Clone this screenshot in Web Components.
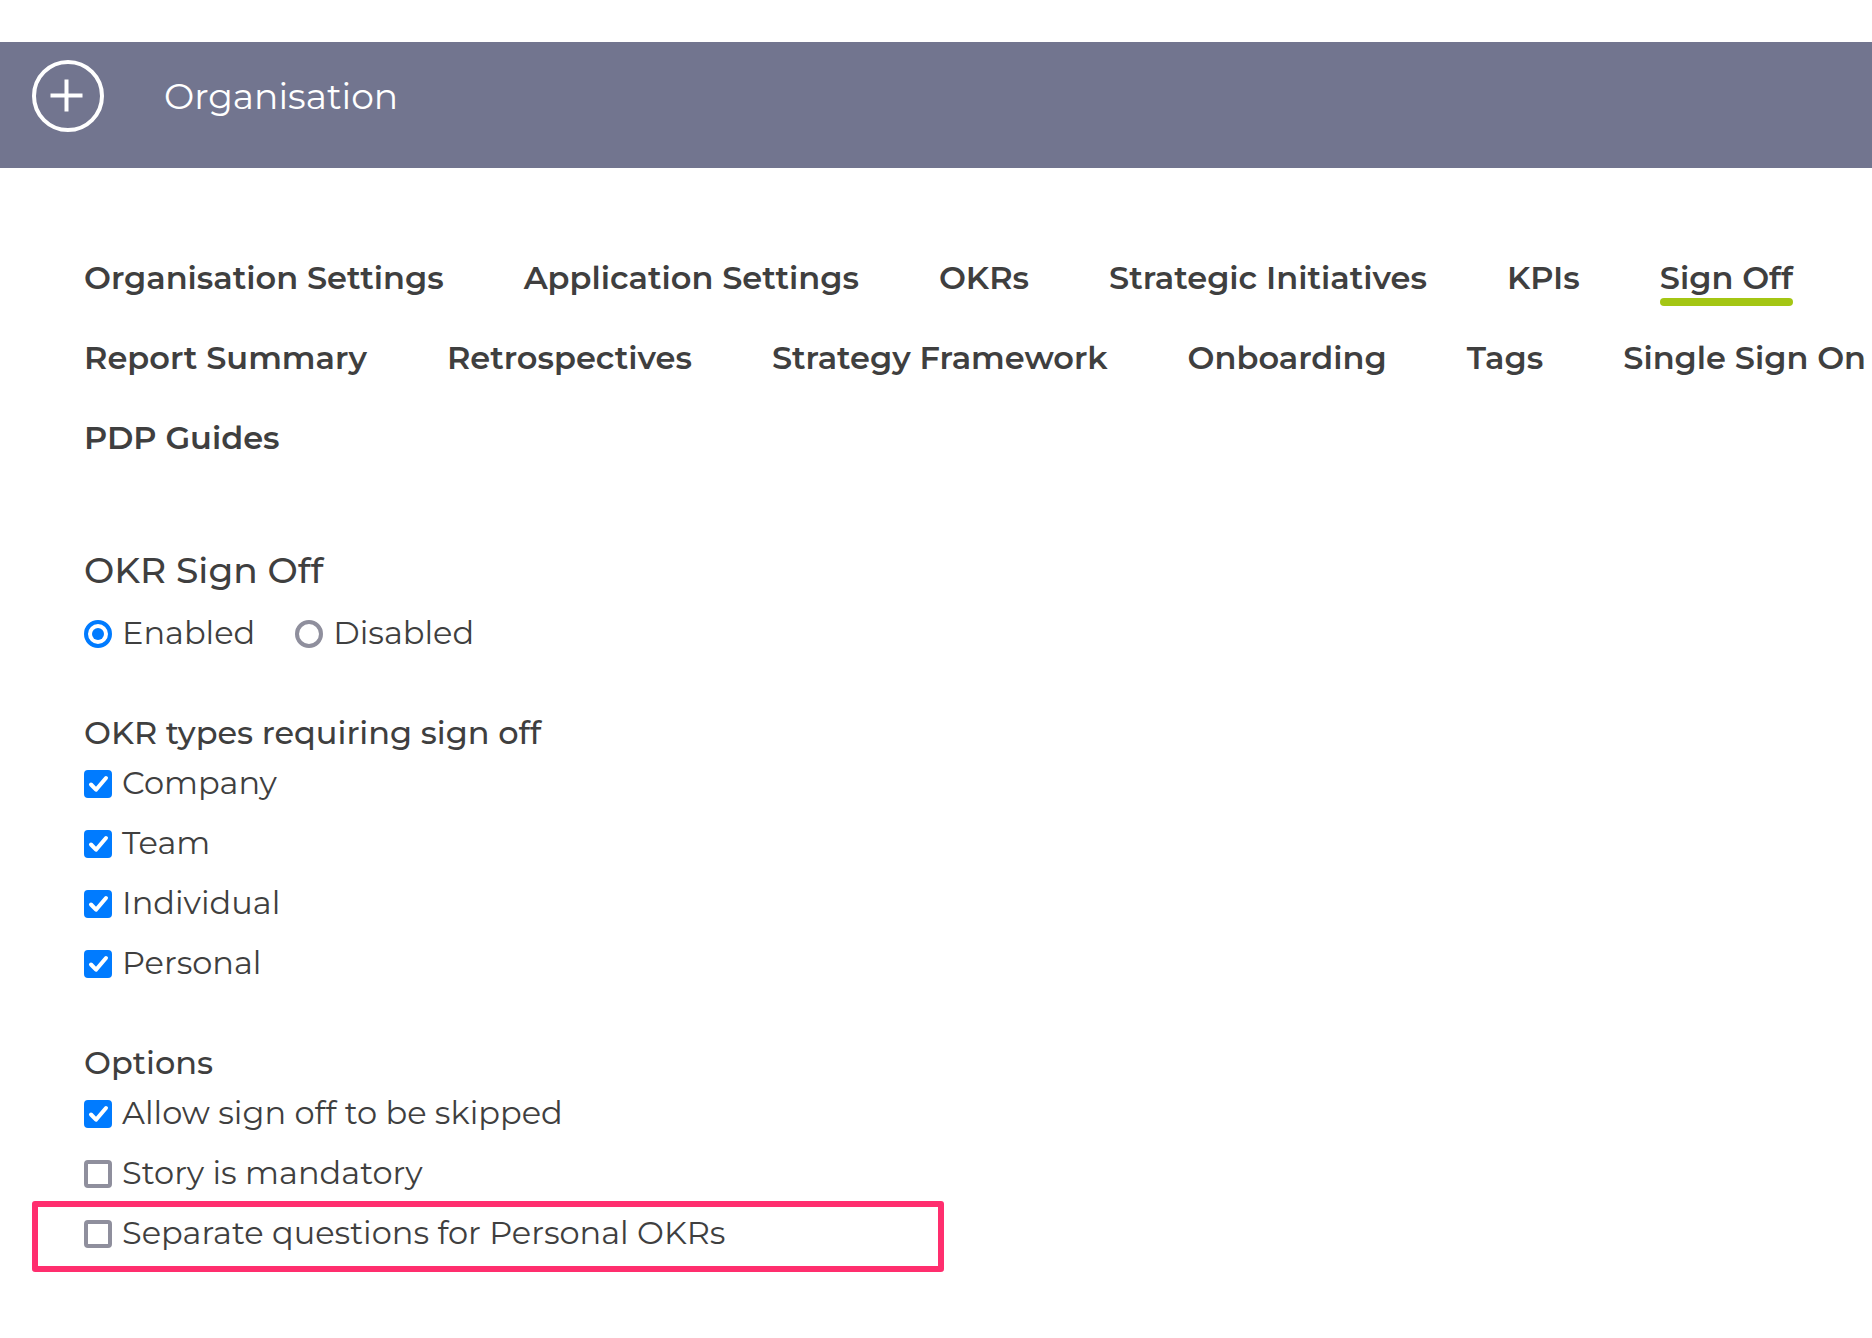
<!DOCTYPE html>
<html lang="en">
<head>
<meta charset="utf-8">
<title>Organisation</title>
<style>
  body {
    margin: 0;
    background: #ffffff;
    color: #3f3f3f;
    font-family: Montserrat, Inter, sans-serif;
    font-size: 32px;
    line-height: 40px;
  }

  main {
    padding: 70px 0 64px 84px;
  }
</style>
</head>
<body>
<page-header>Organisation</page-header>
<main>
  <settings-nav>
    <nav-tab>Organisation Settings</nav-tab>
    <nav-tab>Application Settings</nav-tab>
    <nav-tab>OKRs</nav-tab>
    <nav-tab>Strategic Initiatives</nav-tab>
    <nav-tab>KPIs</nav-tab>
    <nav-tab active>Sign Off</nav-tab>
    <nav-tab>Report Summary</nav-tab>
    <nav-tab>Retrospectives</nav-tab>
    <nav-tab>Strategy Framework</nav-tab>
    <nav-tab>Onboarding</nav-tab>
    <nav-tab>Tags</nav-tab>
    <nav-tab>Single Sign On</nav-tab>
    <nav-tab>PDP Guides</nav-tab>
  </settings-nav>
  <sign-off-settings>
    <radio-group name="signoff" options="Enabled,Disabled" value="Enabled"></radio-group>
    <option-group heading="OKR types requiring sign off">
      <check-option checked>Company</check-option>
      <check-option checked>Team</check-option>
      <check-option checked>Individual</check-option>
      <check-option checked>Personal</check-option>
    </option-group>
    <option-group heading="Options">
      <check-option checked>Allow sign off to be skipped</check-option>
      <check-option>Story is mandatory</check-option>
      <check-option highlight>Separate questions for Personal OKRs</check-option>
    </option-group>
  </sign-off-settings>
</main>

<script>
class PageHeader extends HTMLElement {
  constructor() {
    super();
    this.attachShadow({ mode: 'open' });
  }

  connectedCallback() {
    this.shadowRoot.innerHTML = `
      <style>
        :host {
          display: block;
          padding-top: 42px;
        }

        header {
          display: flex;
          gap: 60px;
          padding: 18px 32px 36px;
          background: #72758f;
          color: #ffffff;
        }

        button {
          width: 72px;
          height: 72px;
          padding: 0;
          border: 0;
          background: none;
          color: inherit;
        }

        svg {
          display: block;
        }

        h1 {
          margin: 0;
          font-size: 36px;
          font-weight: 400;
          line-height: 72px;
        }
      </style>

      <header>
        <button type="button" aria-label="Add">
          <svg width="72" height="72" viewBox="0 0 72 72" fill="none" stroke="currentColor" stroke-width="4">
            <circle cx="36" cy="36" r="34"/>
            <path d="M18.5 35.5h32M34.5 19.5v32"/>
          </svg>
        </button>
        <h1><slot></slot></h1>
      </header>
    `;
  }
}

class SettingsNav extends HTMLElement {
  constructor() {
    super();
    this.attachShadow({ mode: 'open' });
  }

  connectedCallback() {
    this.shadowRoot.innerHTML = `
      <style>
        :host {
          display: block;
        }

        nav {
          display: flex;
          flex-wrap: wrap;
          column-gap: 80px;
        }
      </style>

      <nav><slot></slot></nav>
    `;
  }
}

class NavTab extends HTMLElement {
  constructor() {
    super();
    this.attachShadow({ mode: 'open' });
  }

  connectedCallback() {
    this.shadowRoot.innerHTML = `
      <style>
        :host {
          display: block;
          padding: 20px 0;
        }

        a {
          display: block;
          position: relative;
          color: inherit;
          font-weight: 600;
          text-decoration: none;
          white-space: nowrap;
        }

        /* bar under the current tab */
        :host([active]) a::after {
          content: '';
          position: absolute;
          left: 0;
          right: 0;
          top: 100%;
          height: 8px;
          border-radius: 4px;
          background: #a4c614;
        }
      </style>

      <a href="#"><slot></slot></a>
    `;
  }
}

class SignOffSettings extends HTMLElement {
  constructor() {
    super();
    this.attachShadow({ mode: 'open' });
  }

  connectedCallback() {
    this.shadowRoot.innerHTML = `
      <style>
        :host {
          display: block;
          margin-top: 70px;
        }

        h2 {
          margin: 0 0 21px;
          font-size: 36px;
          font-weight: 500;
          line-height: 44px;
        }

        .groups {
          display: flex;
          flex-direction: column;
          gap: 60px;
        }
      </style>

      <section>
        <h2>OKR Sign Off</h2>
        <div class="groups"><slot></slot></div>
      </section>
    `;
  }
}

class RadioGroup extends HTMLElement {
  constructor() {
    super();
    this.attachShadow({ mode: 'open' });
  }

  connectedCallback() {
    const name = this.getAttribute('name') || '';
    const value = this.getAttribute('value') || '';
    const options = (this.getAttribute('options') || '').split(',');

    this.shadowRoot.innerHTML = `
      <style>
        :host {
          display: flex;
          gap: 40px;
        }

        label {
          display: flex;
          align-items: center;
          gap: 10px;
        }

        input {
          appearance: none;
          box-sizing: border-box;
          width: 28px;
          height: 28px;
          margin: 2px 0 0;
          border: 4px solid #8f8f9d;
          border-radius: 50%;
          background: #ffffff;
        }

        input:checked {
          padding: 4px;
          border-color: #007bff;
        }

        input:checked::before {
          content: '';
          display: block;
          height: 100%;
          border-radius: 50%;
          background: #007bff;
        }
      </style>

      ${options.map(option => `
        <label>
          <input type="radio" name="${name}" value="${option}" ${option === value ? 'checked' : ''}>
          <span>${option}</span>
        </label>
      `).join('')}
    `;
  }
}

class OptionGroup extends HTMLElement {
  constructor() {
    super();
    this.attachShadow({ mode: 'open' });
  }

  connectedCallback() {
    const heading = this.getAttribute('heading') || '';

    this.shadowRoot.innerHTML = `
      <style>
        :host {
          display: block;
        }

        h3 {
          margin: 0 0 10px;
          font-size: 32px;
          font-weight: 500;
          line-height: 40px;
        }

        .options {
          display: flex;
          flex-direction: column;
          gap: 20px;
        }
      </style>

      <h3>${heading}</h3>
      <div class="options"><slot></slot></div>
    `;
  }
}

class CheckOption extends HTMLElement {
  constructor() {
    super();
    this.attachShadow({ mode: 'open' });
  }

  connectedCallback() {
    const checked = this.hasAttribute('checked') ? 'checked' : '';

    this.shadowRoot.innerHTML = `
      <style>
        :host {
          display: flex;
          position: relative;
        }

        label {
          display: flex;
          align-items: center;
          gap: 10px;
        }

        .box {
          display: grid;
          width: 28px;
          height: 28px;
          margin-top: 2px;
        }

        input,
        svg {
          grid-area: 1 / 1;
          width: 28px;
          height: 28px;
          margin: 0;
        }

        input {
          appearance: none;
          box-sizing: border-box;
          border: 4px solid #8f8f9d;
          border-radius: 4px;
          background: #ffffff;
        }

        input:checked {
          border-color: #007bff;
          background: #007bff;
        }

        svg {
          visibility: hidden;
          pointer-events: none;
        }

        input:checked + svg {
          visibility: visible;
        }

        /* frame drawn around the row, out into the page margin */
        :host([highlight])::after {
          content: '';
          position: absolute;
          left: -52px;
          top: -12px;
          bottom: -19px;
          width: 51vw;
          box-sizing: border-box;
          max-width: 912px;
          border: 6px solid #ff2e6e;
          border-radius: 3px;
          pointer-events: none;
        }
      </style>

      <label>
        <span class="box">
          <input type="checkbox" ${checked}>
          <svg viewBox="0 0 28 28" fill="none" stroke="#ffffff" stroke-width="4" stroke-linecap="round" stroke-linejoin="round">
            <path d="M7 14.5l5 5.2L22 8"/>
          </svg>
        </span>
        <span><slot></slot></span>
      </label>
    `;
  }
}

customElements.define('page-header', PageHeader);
customElements.define('settings-nav', SettingsNav);
customElements.define('nav-tab', NavTab);
customElements.define('sign-off-settings', SignOffSettings);
customElements.define('radio-group', RadioGroup);
customElements.define('option-group', OptionGroup);
customElements.define('check-option', CheckOption);
</script>
</body>
</html>
